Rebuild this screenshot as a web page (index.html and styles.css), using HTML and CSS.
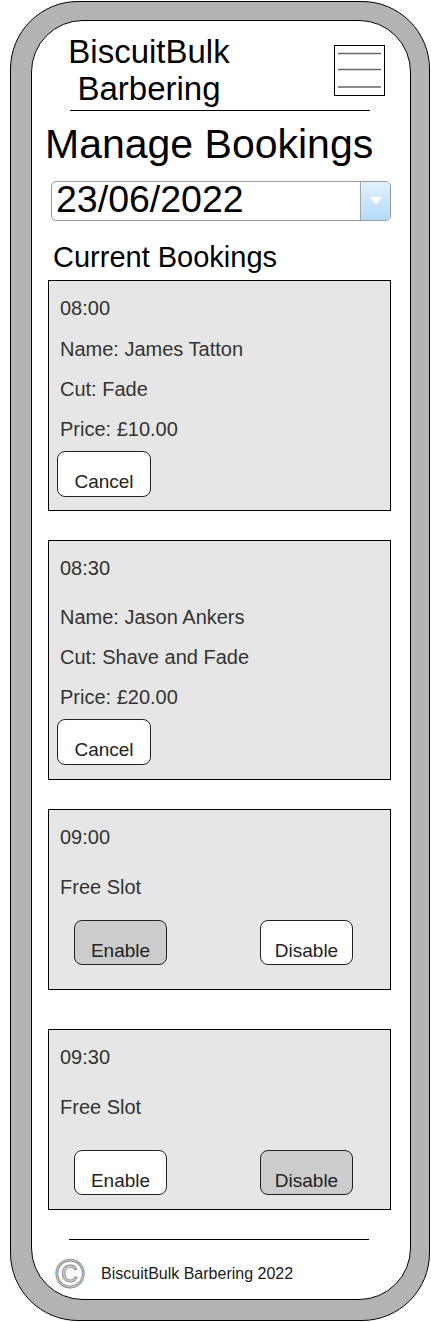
FILE: index.html
```html
<!DOCTYPE html>
<html lang="en">
<head>
<meta charset="utf-8">
<title>BiscuitBulk Barbering - Manage Bookings</title>
<link rel="stylesheet" href="styles.css">
</head>
<body>
<div class="phone">
  <div class="screen">
    <header class="top">
      <div class="brand">BiscuitBulk<br>Barbering</div>
      <div class="menu">
        <svg width="49" height="49" viewBox="0 0 49 49">
          <line x1="3" y1="7.5" x2="46" y2="7.5" stroke="#666" stroke-width="1.6"/>
          <line x1="3" y1="23.5" x2="46" y2="23.5" stroke="#666" stroke-width="1.6"/>
          <line x1="3" y1="41" x2="46" y2="41" stroke="#666" stroke-width="1.6"/>
        </svg>
      </div>
    </header>
    <div class="rule rule-top"></div>
    <h1 class="title">Manage Bookings</h1>
    <div class="date-select">
      <span class="date-value">23/06/2022</span>
      <span class="date-btn">
        <svg width="14" height="10" viewBox="0 0 14 10"><polygon points="1,1 13,1 7,9" fill="#fff"/></svg>
      </span>
    </div>
    <h2 class="section">Current Bookings</h2>

    <div class="card card-first">
      <div class="line time-tight">08:00</div>
      <div class="line">Name: James Tatton</div>
      <div class="line">Cut: Fade</div>
      <div class="line">Price: £10.00</div>
      <button class="btn btn-cancel">Cancel</button>
    </div>

    <div class="card">
      <div class="line time-loose">08:30</div>
      <div class="line">Name: Jason Ankers</div>
      <div class="line">Cut: Shave and Fade</div>
      <div class="line">Price: £20.00</div>
      <button class="btn btn-cancel">Cancel</button>
    </div>

    <div class="card card-slot card-slot-a">
      <div class="line slot-time">09:00</div>
      <div class="line">Free Slot</div>
      <div class="btn-row btn-row-a">
        <button class="btn btn-slot btn-on">Enable</button>
        <button class="btn btn-slot">Disable</button>
      </div>
    </div>

    <div class="card card-slot card-slot-b">
      <div class="line slot-time">09:30</div>
      <div class="line">Free Slot</div>
      <div class="btn-row btn-row-b">
        <button class="btn btn-slot">Enable</button>
        <button class="btn btn-slot btn-on">Disable</button>
      </div>
    </div>

    <div class="rule rule-bottom"></div>
    <footer class="foot">
      <span class="copy">©</span>
      <span class="foot-text">BiscuitBulk Barbering 2022</span>
    </footer>
  </div>
</div>
</body>
</html>
```

FILE: styles.css
```css
* {
  box-sizing: border-box;
}

body {
  margin: 0;
  background: #fff;
  font-family: "Liberation Sans", Arial, sans-serif;
  color: #000;
}

.phone {
  margin: 1px 0 0 10px;
  width: 420px;
  height: 1320px;
  padding: 18px 18px 0 20px;
  background: #b3b3b3;
  border: 1px solid #000;
  border-radius: 68px;
}

.screen {
  width: 380px;
  height: 1280px;
  background: #fff;
  border: 1px solid #000;
  border-radius: 52px;
}

.top {
  display: flex;
  justify-content: space-between;
  align-items: flex-start;
  padding: 12px 25px 0 17px;
}

.brand {
  width: 200px;
  text-align: center;
  font-size: 33px;
  line-height: 37px;
}

.menu {
  margin-top: 12px;
  width: 51px;
  height: 51px;
  border: 1px solid #000;
  display: flex;
}

.rule {
  width: 300px;
  height: 1px;
  background: #000;
}

.rule-top {
  margin: 3px 0 0 38px;
}

.title {
  margin: 10px 0 0 13px;
  font-size: 41px;
  line-height: 46px;
  font-weight: normal;
}

.date-select {
  margin: 14px 19px 0 19px;
  height: 40px;
  border: 1px solid #999;
  border-radius: 5px;
  display: flex;
}

.date-value {
  flex: 1;
  font-size: 37.5px;
  line-height: 34px;
  padding-left: 4px;
}

.date-btn {
  width: 30px;
  border-left: 1px solid #9aa;
  border-radius: 0 4px 4px 0;
  background: linear-gradient(#e4f1fc, #b4dbfb);
  display: flex;
  align-items: center;
  justify-content: center;
}

.section {
  margin: 20px 0 0 21px;
  font-size: 29px;
  line-height: 32px;
  font-weight: normal;
}

.card {
  margin: 29px 0 0 16px;
  width: 343px;
  border: 1px solid #000;
  background: #e6e6e6;
  padding: 7px 8px 14px;
  color: #333;
  font-size: 20px;
}

.card-first {
  margin-top: 7px;
  padding-bottom: 13px;
}

.card-slot-b {
  margin-top: 39px;
}

.card-slot-a {
  padding-bottom: 24px;
}

.line {
  line-height: 40px;
  padding-left: 3px;
}

.time-tight {
  margin-bottom: 1px;
}

.time-loose {
  margin-bottom: 9px;
}

.slot-time {
  margin-bottom: 10px;
}

.btn {
  display: block;
  font-family: "Liberation Sans", Arial, sans-serif;
  color: #222;
  background: #fff;
  border: 1px solid #222;
  border-radius: 8px;
  text-align: center;
  margin: 0;
}

.btn-cancel {
  margin-top: 2px;
  width: 94px;
  height: 46px;
  font-size: 19px;
  line-height: 20px;
  padding: 16px 0 0;
}

.btn-row {
  display: flex;
  gap: 93px;
  padding-left: 17px;
}

.btn-row-a {
  margin-top: 13px;
}

.btn-row-b {
  margin-top: 23px;
}

.btn-slot {
  width: 93px;
  height: 45px;
  font-size: 19px;
  line-height: 20px;
  padding: 16px 0 0;
}

.btn-on {
  background: #ccc;
}

.rule-bottom {
  margin: 29px 0 0 37px;
}

.foot {
  display: flex;
  align-items: center;
  margin-top: 18px;
  padding-left: 23px;
  height: 32px;
}

.copy {
  width: 30px;
  font-size: 40px;
  line-height: 32px;
  color: #d4d4d4;
  -webkit-text-stroke: 0.9px #8a8a8a;
  text-align: center;
}

.foot-text {
  margin-left: 16px;
  font-size: 16px;
  line-height: 20px;
  color: #1a1a1a;
}
```
